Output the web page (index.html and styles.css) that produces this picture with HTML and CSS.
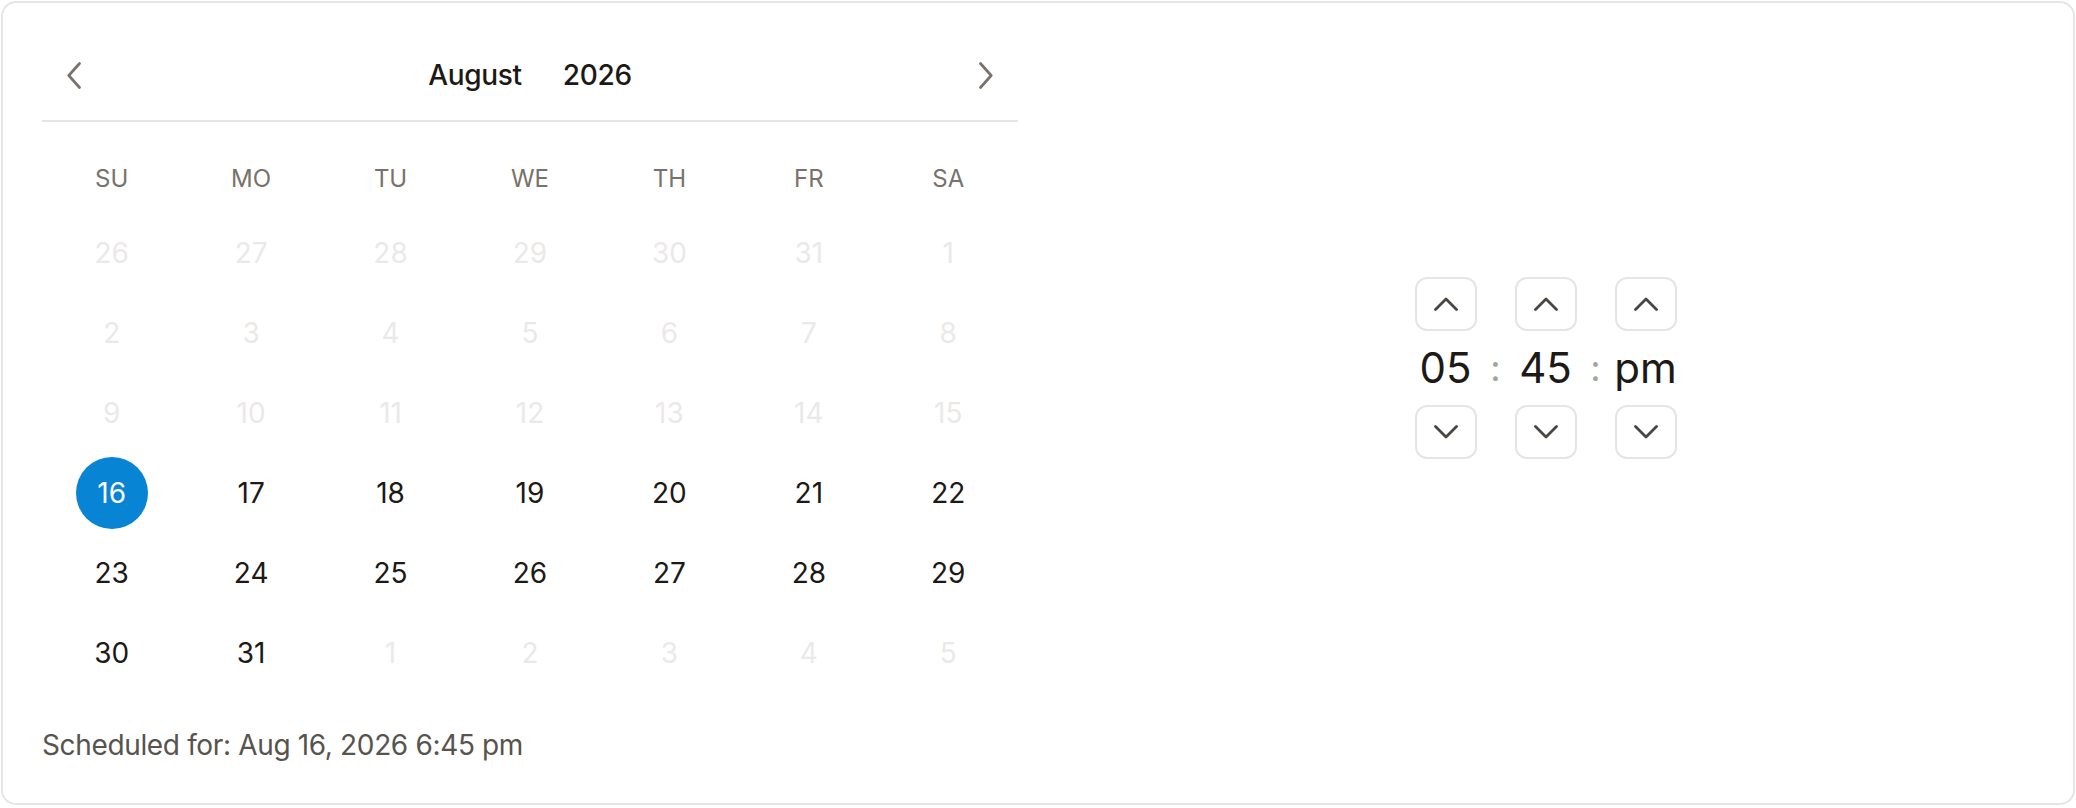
FILE: index.html
```html
<!DOCTYPE html>
<html lang="en">
<head>
<meta charset="utf-8">
<title>Schedule picker</title>
<link rel="stylesheet" href="styles.css">
</head>
<body>
<div class="card">
  <div class="main">
    <div class="calendar">
      <div class="cal-header">
        <button class="nav-btn" aria-label="Previous month">
          <svg width="14" height="27" viewBox="0 0 14 27"><path d="M12.5 1.5 L1.8 13.5 L12.5 25.5" fill="none" stroke="#78716c" stroke-width="2.7" stroke-linecap="round" stroke-linejoin="round"/></svg>
        </button>
        <div class="title">
          <span class="month">August</span>
          <span class="year">2026</span>
        </div>
        <button class="nav-btn" aria-label="Next month">
          <svg width="14" height="27" viewBox="0 0 14 27"><path d="M1.5 1.5 L12.2 13.5 L1.5 25.5" fill="none" stroke="#78716c" stroke-width="2.7" stroke-linecap="round" stroke-linejoin="round"/></svg>
        </button>
      </div>
      <div class="weekdays">
        <span>SU</span><span>MO</span><span>TU</span><span>WE</span><span>TH</span><span>FR</span><span>SA</span>
      </div>
      <div class="days">
        <span class="day out">26</span><span class="day out">27</span><span class="day out">28</span><span class="day out">29</span><span class="day out">30</span><span class="day out">31</span><span class="day out">1</span>
        <span class="day out">2</span><span class="day out">3</span><span class="day out">4</span><span class="day out">5</span><span class="day out">6</span><span class="day out">7</span><span class="day out">8</span>
        <span class="day out">9</span><span class="day out">10</span><span class="day out">11</span><span class="day out">12</span><span class="day out">13</span><span class="day out">14</span><span class="day out">15</span>
        <span class="day"><span class="selected">16</span></span><span class="day">17</span><span class="day">18</span><span class="day">19</span><span class="day">20</span><span class="day">21</span><span class="day">22</span>
        <span class="day">23</span><span class="day">24</span><span class="day">25</span><span class="day">26</span><span class="day">27</span><span class="day">28</span><span class="day">29</span>
        <span class="day">30</span><span class="day">31</span><span class="day out">1</span><span class="day out">2</span><span class="day out">3</span><span class="day out">4</span><span class="day out">5</span>
      </div>
    </div>
    <div class="time-panel">
      <div class="time-picker">
        <div class="time-col">
          <button class="step-btn" aria-label="Increase hour"><svg width="24" height="14" viewBox="0 0 24 14"><path d="M1.5 12.5 L12 2 L22.5 12.5" fill="none" stroke="#4a4541" stroke-width="2.8" stroke-linecap="round" stroke-linejoin="round"/></svg></button>
          <span class="time-value">05</span>
          <button class="step-btn" aria-label="Decrease hour"><svg width="24" height="14" viewBox="0 0 24 14"><path d="M1.5 1.5 L12 12 L22.5 1.5" fill="none" stroke="#4a4541" stroke-width="2.8" stroke-linecap="round" stroke-linejoin="round"/></svg></button>
        </div>
        <div class="sep">:</div>
        <div class="time-col">
          <button class="step-btn" aria-label="Increase minute"><svg width="24" height="14" viewBox="0 0 24 14"><path d="M1.5 12.5 L12 2 L22.5 12.5" fill="none" stroke="#4a4541" stroke-width="2.8" stroke-linecap="round" stroke-linejoin="round"/></svg></button>
          <span class="time-value">45</span>
          <button class="step-btn" aria-label="Decrease minute"><svg width="24" height="14" viewBox="0 0 24 14"><path d="M1.5 1.5 L12 12 L22.5 1.5" fill="none" stroke="#4a4541" stroke-width="2.8" stroke-linecap="round" stroke-linejoin="round"/></svg></button>
        </div>
        <div class="sep">:</div>
        <div class="time-col">
          <button class="step-btn" aria-label="Toggle period"><svg width="24" height="14" viewBox="0 0 24 14"><path d="M1.5 12.5 L12 2 L22.5 12.5" fill="none" stroke="#4a4541" stroke-width="2.8" stroke-linecap="round" stroke-linejoin="round"/></svg></button>
          <span class="time-value">pm</span>
          <button class="step-btn" aria-label="Toggle period"><svg width="24" height="14" viewBox="0 0 24 14"><path d="M1.5 1.5 L12 12 L22.5 1.5" fill="none" stroke="#4a4541" stroke-width="2.8" stroke-linecap="round" stroke-linejoin="round"/></svg></button>
        </div>
      </div>
    </div>
  </div>
  <div class="footer">Scheduled for: Aug 16, 2026 6:45 pm</div>
</div>
</body>
</html>
```

FILE: styles.css
```css
* {
  box-sizing: border-box;
}

html, body {
  margin: 0;
  padding: 0;
  background: #ffffff;
}

body {
  font-family: Inter, "Liberation Sans", sans-serif;
  color: #1c1917;
}

.card {
  margin: 1px;
  width: 2074px;
  height: 804px;
  border: 2px solid #e7e5e4;
  border-radius: 15px;
  background: #ffffff;
  padding: 30px 0 0 39px;
  display: flex;
  flex-direction: column;
}

.main {
  display: flex;
}

.calendar {
  width: 976px;
  flex: none;
}

.cal-header {
  height: 89px;
  padding-bottom: 3px;
  border-bottom: 2px solid #e7e5e4;
  display: flex;
  align-items: center;
  justify-content: space-between;
}

.nav-btn {
  width: 64px;
  height: 50px;
  border: none;
  background: none;
  padding: 0;
  display: flex;
  align-items: center;
  justify-content: center;
  cursor: pointer;
}

.title {
  display: flex;
  gap: 41px;
  font-size: 28px;
  line-height: 40px;
  font-weight: 500;
  color: #1c1917;
  letter-spacing: -0.3px;
}

.weekdays {
  display: grid;
  grid-template-columns: repeat(7, 1fr);
  padding: 40px 0 17px;
  font-size: 24px;
  line-height: 34px;
  color: #78716c;
  text-align: center;
}

.days {
  display: grid;
  grid-template-columns: repeat(7, 1fr);
  grid-auto-rows: 80px;
  font-size: 28px;
  color: #1c1917;
}

.day {
  display: flex;
  align-items: center;
  justify-content: center;
  line-height: 40px;
}

.day.out {
  color: #ebe9e8;
}

.selected {
  width: 72px;
  height: 72px;
  border-radius: 50%;
  background: #0784d4;
  color: #ffffff;
  display: flex;
  align-items: center;
  justify-content: center;
}

.time-panel {
  flex: 1;
  display: flex;
  align-items: center;
  justify-content: center;
  padding-top: 10px;
}

.time-picker {
  display: flex;
  align-items: center;
}

.time-col {
  width: 62px;
  display: flex;
  flex-direction: column;
  align-items: center;
}

.step-btn {
  width: 62px;
  height: 54px;
  border: 2px solid #e5e5e5;
  border-radius: 12px;
  background: #ffffff;
  padding: 0;
  display: flex;
  align-items: center;
  justify-content: center;
  cursor: pointer;
}

.time-value {
  height: 74px;
  display: flex;
  align-items: center;
  justify-content: center;
  font-size: 42px;
  line-height: 50px;
  color: #1c1917;
}

.sep {
  width: 38px;
  text-align: center;
  font-size: 36px;
  line-height: 50px;
  color: #a8a29e;
}

.footer {
  margin-top: 32px;
  font-size: 28px;
  line-height: 40px;
  color: #57534e;
  letter-spacing: -0.35px;
}
```
